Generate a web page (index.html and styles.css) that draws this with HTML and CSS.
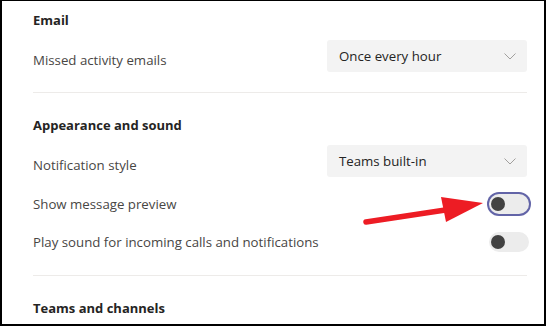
FILE: index.html
```html
<!DOCTYPE html>
<html lang="en">
<head>
  <meta charset="UTF-8">
  <meta name="viewport" content="width=device-width, initial-scale=1.0">
  <title>Notifications</title>
  <link rel="stylesheet" href="styles.css">
</head>
<body>
  <div class="frame">
    <section class="group">
      <h3 class="title first">Email</h3>
      <div class="row select-row">
        <span class="label">Missed activity emails</span>
        <div class="select">
          <span>Once every hour</span>
          <svg width="12" height="7" viewBox="0 0 12 7"><path d="M0.5 0.5 L6 6 L11.5 0.5" fill="none" stroke="#a19f9d" stroke-width="1"/></svg>
        </div>
      </div>
    </section>
    <hr class="divider d1">
    <section class="group">
      <h3 class="title">Appearance and sound</h3>
      <div class="row select-row">
        <span class="label">Notification style</span>
        <div class="select">
          <span>Teams built-in</span>
          <svg width="12" height="7" viewBox="0 0 12 7"><path d="M0.5 0.5 L6 6 L11.5 0.5" fill="none" stroke="#a19f9d" stroke-width="1"/></svg>
        </div>
      </div>
      <div class="row toggle-row r1">
        <span class="label">Show message preview</span>
        <div class="toggle focused"><span class="knob"></span></div>
      </div>
      <div class="row toggle-row r2">
        <span class="label">Play sound for incoming calls and notifications</span>
        <div class="toggle"><span class="knob"></span></div>
      </div>
    </section>
    <hr class="divider d2">
    <section class="group">
      <h3 class="title">Teams and channels</h3>
    </section>

    <!-- annotation arrow -->
    <svg class="arrow" width="546" height="326" viewBox="0 0 546 326">
      <line x1="366" y1="222" x2="452" y2="209" stroke="#ed1c24" stroke-width="5.5" stroke-linecap="round"/>
      <polygon points="441,197 483,203 446,222" fill="#ed1c24"/>
    </svg>
  </div>
</body>
</html>
```

FILE: styles.css
```css
* { margin: 0; padding: 0; box-sizing: border-box; }
body {
  font-family: 'Open Sans', 'Noto Sans', sans-serif;
  background: #fff;
  color: #484644;
  font-size: 13.25px;
}
.frame {
  position: relative;
  width: 546px;
  height: 326px;
  border: 2px solid #000;
  border-top-width: 1px;
  padding: 0 17px 0 31px;
  overflow: hidden;
}
.title {
  font-size: 13px;
  font-weight: 700;
  color: #252423;
  line-height: 20px;
  margin-top: 22px;
}
.title.first { margin-top: 9px; }
.row {
  display: flex;
  justify-content: space-between;
}
.select-row {
  margin-top: 10px;
  height: 32px;
}
.select-row .label {
  line-height: 20px;
  margin-top: 10px;
}
.select {
  width: 200px;
  height: 32px;
  background: #f3f3f3;
  border-radius: 3px;
  display: flex;
  align-items: center;
  justify-content: space-between;
  padding: 0 11px 0 12px;
  color: #252423;
}
.toggle-row {
  align-items: center;
  height: 20px;
}
.toggle-row.r1 { margin-top: 17px; }
.toggle-row.r2 { margin-top: 18px; }
.toggle {
  width: 40px;
  height: 20px;
  border-radius: 10px;
  background: #ececec;
  margin-right: -2px;
  display: flex;
  align-items: center;
  padding-left: 2px;
}
.toggle.focused { box-shadow: 0 0 0 2px #6264a7; }
.knob {
  width: 14px;
  height: 14px;
  border-radius: 50%;
  background: #424242;
}
.divider {
  border: none;
  border-top: 1px solid #edebe9;
}
.d1 { margin-top: 20px; }
.d2 { margin-top: 23px; }
.arrow {
  position: absolute;
  left: -2px;
  top: -1px;
  pointer-events: none;
}
```
